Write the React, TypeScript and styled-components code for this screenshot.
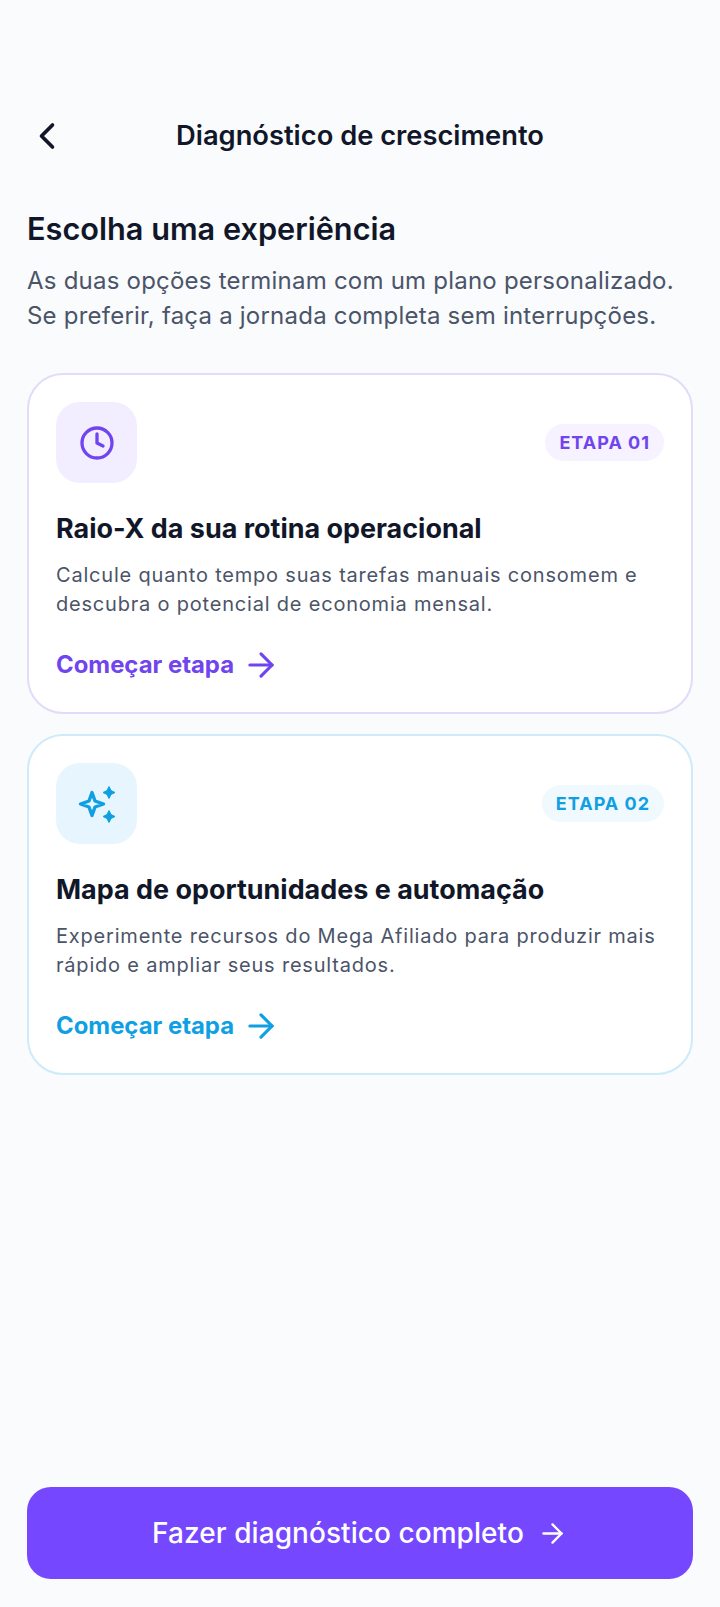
import { createGlobalStyle, styled } from 'styled-components';
import { ArrowRight, ChevronLeft, Clock } from 'lucide-react';

const GlobalStyle = createGlobalStyle`
  html, body {
    margin: 0;
    padding: 0;
    background: #f9fbfd;
  }
  * {
    box-sizing: border-box;
  }
`;

const Screen = styled.div`
  width: 720px;
  height: 1607px;
  padding: 112px 27px 28px;
  display: flex;
  flex-direction: column;
  background: #f9fbfd;
  font-family: Inter, "Liberation Sans", sans-serif;
  color: #111729;
`;

const Header = styled.header`
  height: 48px;
  display: grid;
  grid-template-columns: 48px 1fr 48px;
  align-items: center;
`;

const BackButton = styled.div`
  margin-left: -2px;
  display: flex;
  align-items: center;
  justify-content: flex-start;
`;

const HeaderTitle = styled.h1`
  margin: 0;
  text-align: center;
  font-size: 27.3px;
  font-weight: 600;
  line-height: 48px;
`;

const Intro = styled.section`
  margin-top: 49px;
`;

const Heading = styled.h2`
  margin: 0;
  font-size: 30.7px;
  font-weight: 600;
  line-height: 40px;
`;

const Lead = styled.p`
  margin: 14px 0 0;
  font-size: 24px;
  line-height: 35px;
  letter-spacing: 0.22px;
  color: #4b5468;
`;

const Cards = styled.div`
  margin-top: 40px;
  display: flex;
  flex-direction: column;
  gap: 20px;
`;

const Card = styled.article<{ $border: string }>`
  height: 341px;
  padding: 27px;
  background: #fff;
  border: 2px solid ${(p) => p.$border};
  border-radius: 36px;
`;

const CardTop = styled.div`
  display: flex;
  align-items: center;
  justify-content: space-between;
`;

const IconTile = styled.div<{ $bg: string; $fg: string }>`
  width: 81px;
  height: 81px;
  display: flex;
  align-items: center;
  justify-content: center;
  border-radius: 24px;
  background: ${(p) => p.$bg};
  color: ${(p) => p.$fg};
`;

const Badge = styled.span<{ $bg: string; $fg: string }>`
  height: 37px;
  padding: 0 14px;
  display: flex;
  align-items: center;
  border-radius: 19px;
  font-size: 18px;
  font-weight: 700;
  letter-spacing: 1px;
  background: ${(p) => p.$bg};
  color: ${(p) => p.$fg};
`;

const CardTitle = styled.h3`
  margin: 28px 0 0;
  font-size: 26.95px;
  font-weight: 700;
  line-height: 36px;
`;

const CardText = styled.p`
  margin: 14px 0 0;
  font-size: 20px;
  line-height: 29px;
  letter-spacing: 0.8px;
  color: #4b5468;
`;

const StepLink = styled.div<{ $fg: string }>`
  margin-top: 27px;
  display: flex;
  align-items: center;
  gap: 8px;
  font-size: 23.9px;
  font-weight: 700;
  line-height: 34px;
  color: ${(p) => p.$fg};
`;

const Spacer = styled.div`
  flex: 1;
`;

const PrimaryButton = styled.button`
  height: 92px;
  display: flex;
  align-items: center;
  justify-content: center;
  gap: 13px;
  border: 0;
  border-radius: 24px;
  background: #7547fe;
  color: #fff;
  font-family: inherit;
  font-size: 28px;
  font-weight: 500;
  letter-spacing: 0.06px;
`;

function Sparkles() {
  return (
    <svg width="40" height="40" viewBox="0 0 40 40" fill="none">
      <path
        d="M15 8.5 L18 17 L26.5 20 L18 23 L15 31.5 L12 23 L3.5 20 L12 17 Z"
        stroke="currentColor"
        strokeWidth="3.4"
        strokeLinejoin="round"
      />
      <path
        d="M32 2.5 L34 6.5 L38 8.5 L34 10.5 L32 14.5 L30 10.5 L26 8.5 L30 6.5 Z"
        fill="currentColor"
        stroke="currentColor"
        strokeLinejoin="round"
      />
      <path
        d="M32 26.5 L34 30.5 L38 32.5 L34 34.5 L32 38.5 L30 34.5 L26 32.5 L30 30.5 Z"
        fill="currentColor"
        stroke="currentColor"
        strokeLinejoin="round"
      />
    </svg>
  );
}

const steps = [
  {
    label: 'ETAPA 01',
    title: 'Raio-X da sua rotina operacional',
    lines: ['Calcule quanto tempo suas tarefas manuais consomem e', 'descubra o potencial de economia mensal.'],
    border: '#e2dbf9',
    tile: '#f3eeff',
    badge: '#f6f2ff',
    fg: '#7044ee',
    icon: <Clock size={36} strokeWidth={2.2} />,
  },
  {
    label: 'ETAPA 02',
    title: 'Mapa de oportunidades e automação',
    lines: ['Experimente recursos do Mega Afiliado para produzir mais', 'rápido e ampliar seus resultados.'],
    border: '#cfeaf8',
    tile: '#e7f6fe',
    badge: '#eff9fe',
    fg: '#0fa0e3',
    icon: <Sparkles />,
  },
];

export default function App() {
  return (
    <>
      <GlobalStyle />
      <Screen>
        <Header>
          <BackButton>
            <ChevronLeft size={44} strokeWidth={2} />
          </BackButton>
          <HeaderTitle>Diagnóstico de crescimento</HeaderTitle>
        </Header>
        <Intro>
          <Heading>Escolha uma experiência</Heading>
          <Lead>
            As duas opções terminam com um plano personalizado.
            <br />
            Se preferir, faça a jornada completa sem interrupções.
          </Lead>
        </Intro>
        <Cards>
          {steps.map((step) => (
            <Card key={step.label} $border={step.border}>
              <CardTop>
                <IconTile $bg={step.tile} $fg={step.fg}>
                  {step.icon}
                </IconTile>
                <Badge $bg={step.badge} $fg={step.fg}>
                  {step.label}
                </Badge>
              </CardTop>
              <CardTitle>{step.title}</CardTitle>
              <CardText>
                {step.lines[0]}
                <br />
                {step.lines[1]}
              </CardText>
              <StepLink $fg={step.fg}>
                Começar etapa
                <ArrowRight size={38} strokeWidth={2} />
              </StepLink>
            </Card>
          ))}
        </Cards>
        <Spacer />
        <PrimaryButton>
          Fazer diagnóstico completo
          <ArrowRight size={31} strokeWidth={1.85} />
        </PrimaryButton>
      </Screen>
    </>
  );
}
